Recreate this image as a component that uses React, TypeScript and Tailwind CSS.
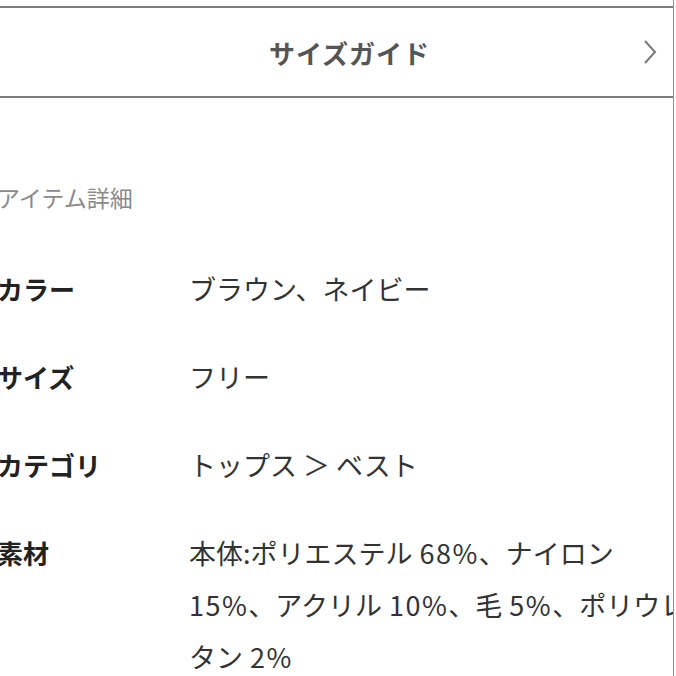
import React from 'react';

const JP = '"Noto Sans CJK JP", "Noto Sans", sans-serif';

// numbers in the material text sit a little apart from the kana before them
function N({ children, lead }: { children: React.ReactNode; lead?: boolean }) {
  return <span className={lead ? 'tracking-[1.5px]' : 'ml-[7px] tracking-[1.5px]'}>{children}</span>;
}

const ROWS: { label: string; lines: React.ReactNode[] }[] = [
  { label: 'カラー', lines: ['ブラウン、ネイビー'] },
  { label: 'サイズ', lines: ['フリー'] },
  { label: 'カテゴリ', lines: ['トップス ＞ ベスト'] },
  {
    label: '素材',
    lines: [
      <>本体:ポリエステル<N>68%</N>、ナイロン</>,
      <><N lead>15%</N>、アクリル<N>10%</N>、毛<N>5%</N>、ポリウレタン<N>2%</N></>,
      <>タン<N>2%</N></>,
    ],
  },
];

function Chevron() {
  return (
    <svg width="14" height="26" viewBox="0 0 14 26" className="shrink-0">
      <polyline points="2,2 12,13 2,24" fill="none" stroke="#7a7a7a" strokeWidth="2" />
    </svg>
  );
}

export default function App() {
  return (
    <div className="w-[676px] h-[676px] bg-white overflow-hidden flex" style={{ fontFamily: JP }}>
      <div className="w-[674px] h-full border-r border-[#8f8f8f] overflow-hidden pt-[6px]">
        {/* size guide link */}
        <div className="h-[92px] border-y-2 border-[#7d7d7d] flex items-center pr-[16px]">
          <span className="flex-1 text-center pl-[56px] text-[26px] font-bold text-[#555] tracking-[1px]">
            サイズガイド
          </span>
          <Chevron />
        </div>

        {/* item details */}
        <div className="ml-[-3px] pt-[83px]">
          <h3 className="text-[23px] leading-[32px] text-[#8a8a8a]">アイテム詳細</h3>
          <div className="flex flex-col gap-[36px] mt-[50px]">
            {ROWS.map((row) => (
              <div key={row.label} className="flex">
                <div className="w-[192px] shrink-0 text-[26px] leading-[52px] font-bold text-[#222]">
                  {row.label}
                </div>
                <div className="text-[27px] leading-[52px] text-[#333] whitespace-nowrap">
                  {row.lines.map((l, i) => (
                    <div key={i}>{l}</div>
                  ))}
                </div>
              </div>
            ))}
          </div>
        </div>
      </div>
    </div>
  );
}
